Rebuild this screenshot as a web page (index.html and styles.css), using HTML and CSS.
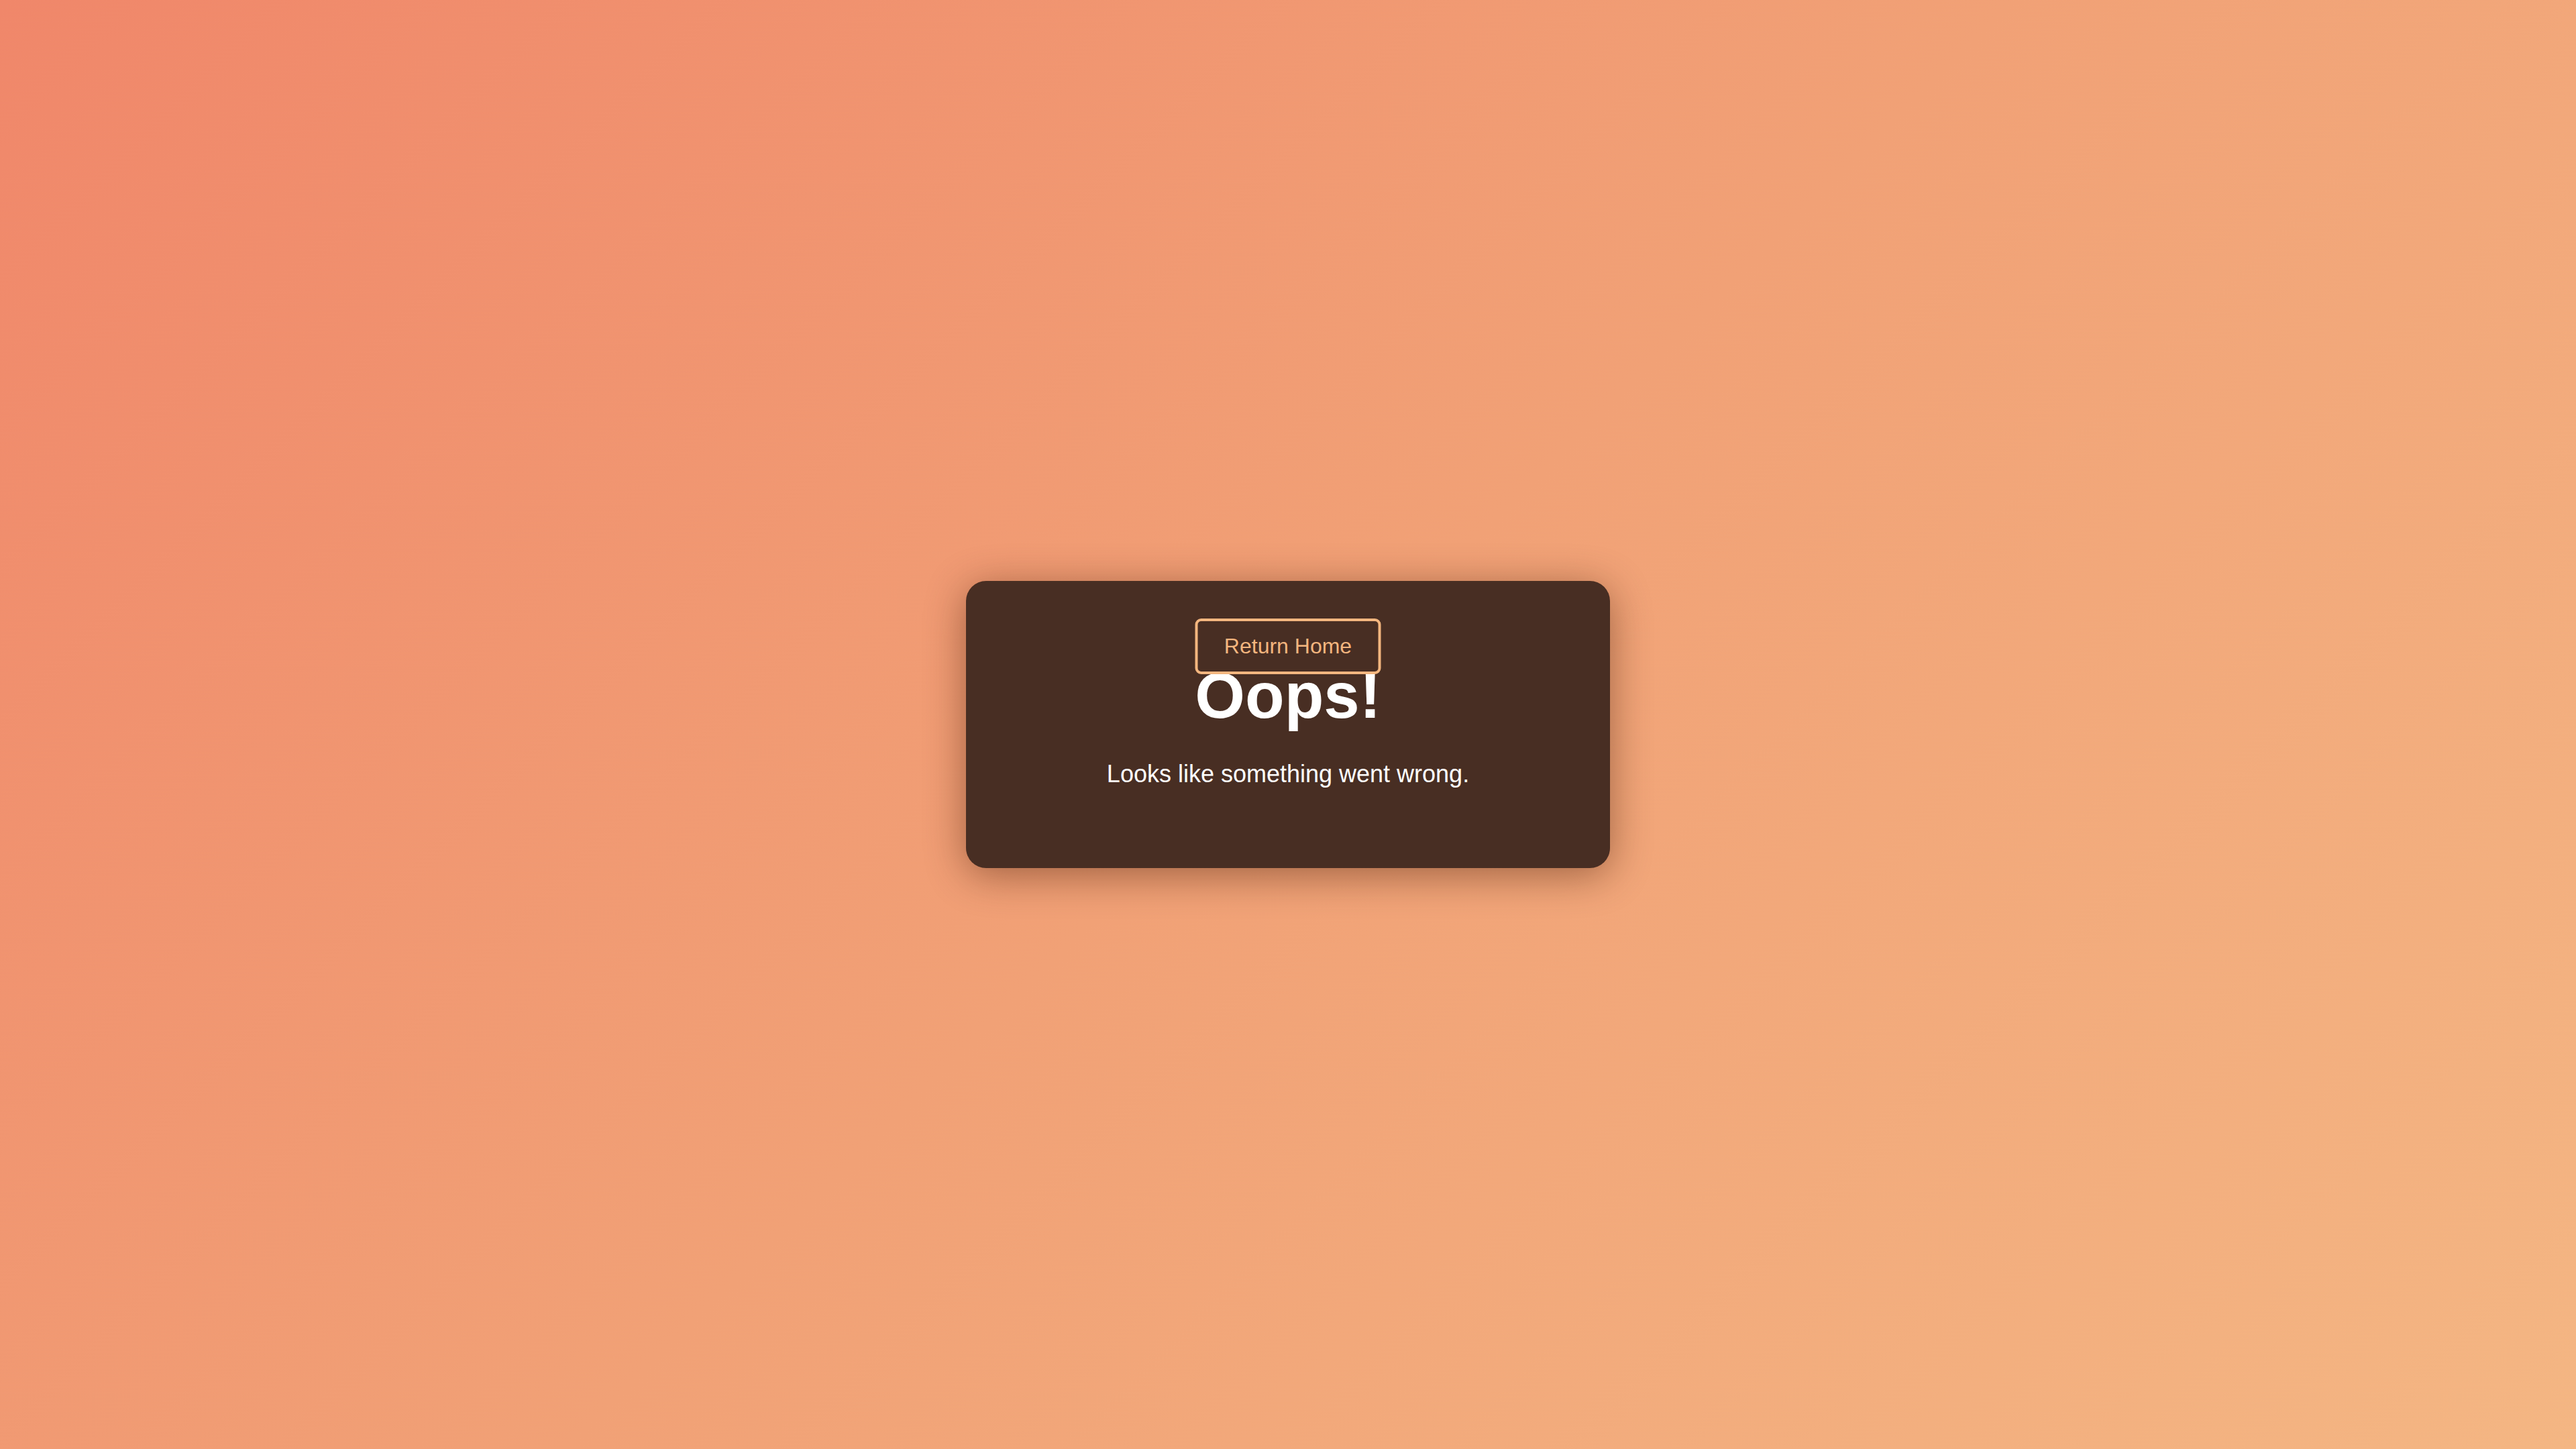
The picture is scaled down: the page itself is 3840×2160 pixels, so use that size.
FILE: index.html
```html
<!DOCTYPE html>
<html lang="en">
<head>
<meta charset="utf-8">
<title>Oops!</title>
<link rel="stylesheet" href="styles.css">
</head>
<body>
<main class="page">
  <section class="card">
    <a class="home-btn" href="#">Return Home</a>
    <h1 class="title">Oops!</h1>
    <p class="message">Looks like something went wrong.</p>
  </section>
</main>
</body>
</html>
```

FILE: styles.css
```css
html, body {
  margin: 0;
  padding: 0;
}

body {
  font-family: "Liberation Sans", Arial, Helvetica, sans-serif;
  background: linear-gradient(135deg, #f0876a 0%, #f1a176 50%, #f4b683 100%);
  min-height: 100vh;
}

.page {
  min-height: 100vh;
  display: flex;
  align-items: center;
  justify-content: center;
}

.card {
  position: relative;
  box-sizing: border-box;
  width: 960px;
  height: 428px;
  padding: 116px 40px 0;
  background: #482e23;
  border-radius: 30px;
  box-shadow: 0 10px 60px rgba(60, 20, 0, 0.45);
  text-align: center;
  color: #ffffff;
}

.home-btn {
  position: absolute;
  top: 56px;
  left: 50%;
  transform: translateX(-50%);
  box-sizing: border-box;
  width: 277px;
  height: 83px;
  display: flex;
  align-items: center;
  justify-content: center;
  border: 4px solid #f4b67f;
  border-radius: 9px;
  color: #f4b67f;
  font-size: 32px;
  text-decoration: none;
  background: transparent;
}

.title {
  margin: 0;
  font-size: 96px;
  font-weight: 700;
  line-height: 1.15;
}

.message {
  margin: 41px 0 0;
  font-size: 36px;
  line-height: 1.15;
}
```
